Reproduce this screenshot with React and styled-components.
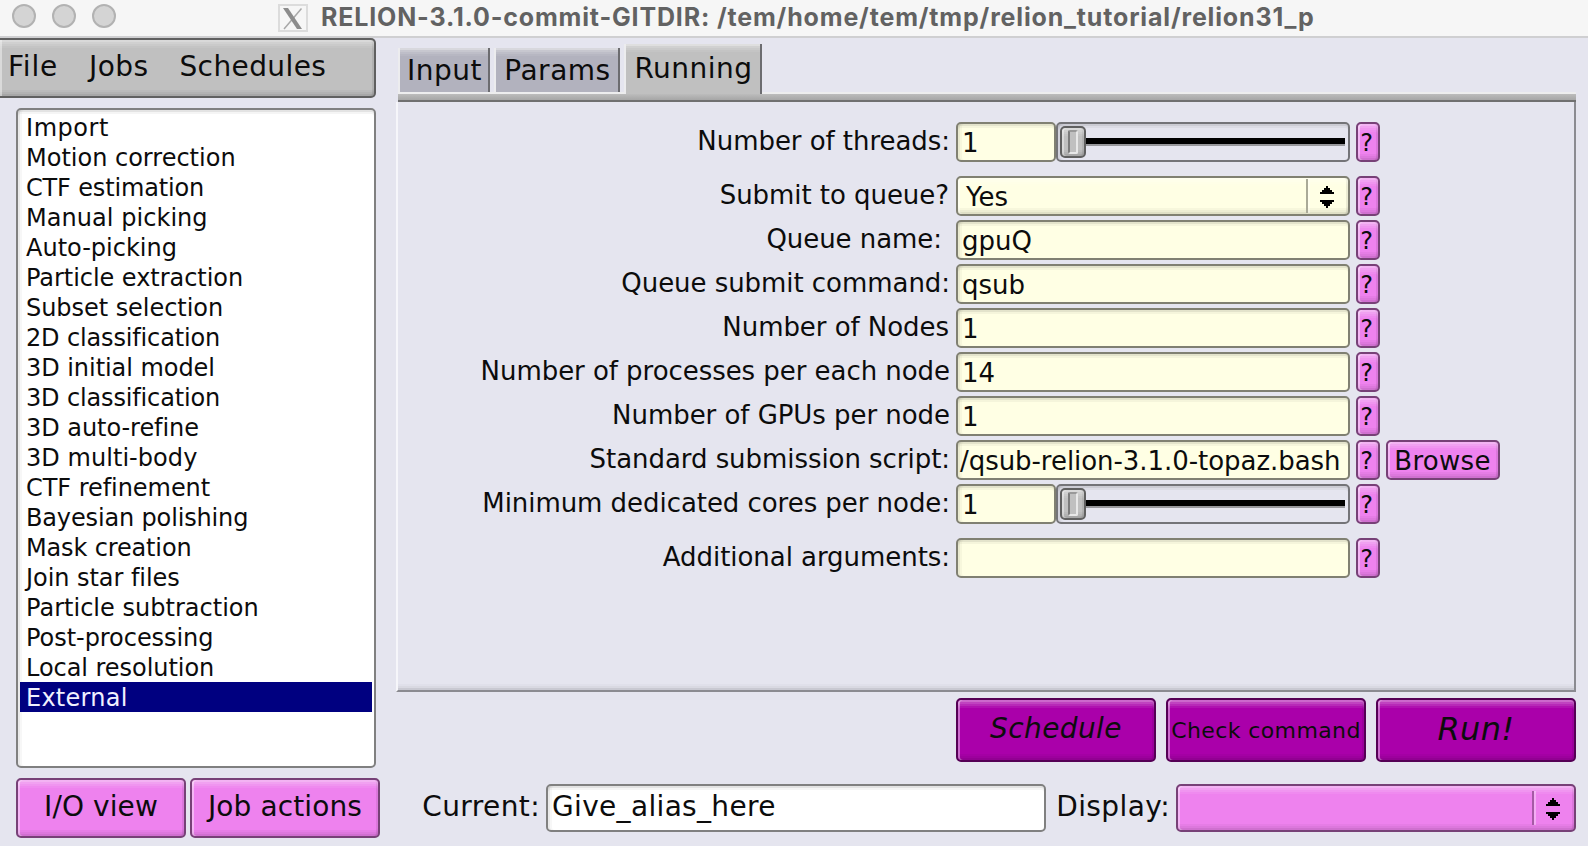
import React from 'react';
import styled, { createGlobalStyle, css } from 'styled-components';

const Global = createGlobalStyle`
  *, *::before, *::after { box-sizing: border-box; }
  body {
    margin: 0;
    background: #e5e5ef;
    font-family: "DejaVu Sans", sans-serif;
    color: #0c0c0c;
    overflow: hidden;
  }
  button, input { font: inherit; color: inherit; margin: 0; outline: none; }
`;

/* Stepped highlight at the top and left, stepped shade at the bottom and right. */
const raised = css`
  box-shadow:
    inset 0 2px rgba(255, 255, 255, 0.2),
    inset 0 4px rgba(255, 255, 255, 0.12),
    inset 0 6px rgba(255, 255, 255, 0.1),
    inset 0 8px rgba(255, 255, 255, 0.07),
    inset 2px 0 rgba(255, 255, 255, 0.42),
    inset 0 -2px rgba(0, 0, 0, 0.06),
    inset 0 -4px rgba(0, 0, 0, 0.04),
    inset 0 -6px rgba(0, 0, 0, 0.03),
    inset -2px 0 rgba(0, 0, 0, 0.08);
`;

const sunken = css`
  box-shadow:
    inset 0 2px rgba(0, 0, 0, 0.07),
    inset 0 4px rgba(0, 0, 0, 0.04),
    inset 2px 0 rgba(0, 0, 0, 0.05),
    inset 4px 0 rgba(0, 0, 0, 0.03);
`;

const Window = styled.div`
  width: 1588px;
  height: 846px;
  display: flex;
  flex-direction: column;
  background: #e5e5ef;
`;

const TitleBar = styled.header`
  height: 38px;
  flex: none;
  display: flex;
  align-items: flex-start;
  padding-left: 12px;
  background: #f6f6f6;
  border-bottom: 2px solid #cfcfd1;
`;

const Lights = styled.div`
  display: flex;
  gap: 16px;
  margin-top: 4px;
  width: 266px;
`;

const Light = styled.span`
  width: 24px;
  height: 24px;
  border-radius: 50%;
  background: #d4d4d4;
  border: 2px solid #b2b2b2;
`;

const AppIcon = styled.svg`
  width: 30px;
  height: 28px;
  margin-top: 4px;
  flex: none;
`;

const Title = styled.h1`
  margin: 0 0 0 13px;
  font: 700 25px/35px Inter, sans-serif;
  letter-spacing: 0.84px;
  color: #626262;
  white-space: nowrap;
`;

const Body = styled.div`
  display: flex;
  flex: 1;
`;

const Side = styled.aside`
  width: 396px;
  flex: none;
`;

const MenuBar = styled.nav`
  ${raised}
  display: flex;
  align-items: center;
  gap: 31px;
  width: 376px;
  height: 60px;
  padding: 0 0 4px 8px;
  background: #c0c0c0;
  border: 2px solid #606060;
  border-left: 0;
  border-radius: 0 5px 5px 0;
  font-size: 28px;
`;

const MenuItem = styled.span`
  letter-spacing: ${(p) => p.$spacing}px;
`;

const JobList = styled.ul`
  ${sunken}
  list-style: none;
  width: 360px;
  height: 660px;
  margin: 10px 0 10px 16px;
  padding: 2px;
  background: #fff;
  border: 2px solid #808080;
  border-radius: 5px;
`;

const Job = styled.li`
  height: 30px;
  padding-left: 6px;
  font-size: 24px;
  line-height: 33px;
  letter-spacing: ${(p) => p.$spacing - 0.15}px;
  white-space: nowrap;
  background: ${(p) => (p.$selected ? '#000080' : 'transparent')};
  color: ${(p) => (p.$selected ? '#f0f0ff' : 'inherit')};
`;

const SideActions = styled.div`
  display: flex;
  gap: 4px;
  margin-left: 16px;
`;

const Button = styled.button`
  ${raised}
  display: flex;
  align-items: center;
  justify-content: center;
  flex: none;
  padding: 0;
  background: #ee82ee;
  border: 2px solid #774177;
  border-radius: 5px;
  white-space: nowrap;
`;

const SideButton = styled(Button)`
  width: ${(p) => p.$width}px;
  height: 60px;
  padding-bottom: 4px;
  font-size: 28px;
  letter-spacing: 0.1px;
`;

const HelpButton = styled(Button)`
  width: 24px;
  height: 40px;
  padding: 2px 3px 0 0;
  font-size: 24px;
`;

const BrowseButton = styled(Button)`
  width: 114px;
  height: 40px;
  padding: 2px 1px 0 0;
  font-size: 26px;
  letter-spacing: 0.3px;
`;

const JobButton = styled(Button)`
  width: 200px;
  height: 64px;
  background: #aa00aa;
  border-color: #550055;
  font-size: ${(p) => p.$size}px;
  font-style: ${(p) => (p.$italic ? 'italic' : 'normal')};
  letter-spacing: 0.4px;
  padding-bottom: ${(p) => (p.$italic ? 3 : 0)}px;
`;

const Main = styled.main`
  flex: 1;
  padding-right: 12px;
`;

const Tabs = styled.div`
  display: flex;
  align-items: flex-end;
  gap: 4px;
  height: 54px;
  padding-left: 2px;
`;

const Tab = styled.div`
  position: relative;
  width: ${(p) => p.$width}px;
  height: ${(p) => (p.$active ? 50 : 44)}px;
  margin-bottom: ${(p) => (p.$active ? -2 : 0)}px;
  padding-left: 1px;
  line-height: ${(p) => (p.$active ? 50 : 46)}px;
  text-align: center;
  font-size: 28px;
  letter-spacing: 0.5px;
  background: ${(p) => (p.$active ? '#c0c0c0' : '#b2b2be')};
  border-left: 2px solid #ececee;
  border-right: 2px solid #6c6c70;
  box-shadow:
    inset 0 2px rgba(255, 255, 255, 0.3),
    inset 0 4px rgba(255, 255, 255, 0.14),
    inset 0 6px rgba(255, 255, 255, 0.1),
    inset 0 8px rgba(255, 255, 255, 0.07);
`;

const Bar = styled.div`
  height: 10px;
  margin-left: 2px;
  background: linear-gradient(#bcbcbc, #a6a6a6);
  border-top: 2px solid #ededee;
  border-bottom: 2px solid #707070;
`;

const Panel = styled.section`
  height: 590px;
  padding-top: 20px;
  border-left: 2px solid #f6f6fa;
  border-right: 2px solid #8b8b91;
  border-bottom: 2px solid #8b8b91;
  box-shadow:
    inset 0 -2px rgba(0, 0, 0, 0.07),
    inset 0 -4px rgba(0, 0, 0, 0.03),
    inset 0 -6px rgba(0, 0, 0, 0.02);
`;

const Row = styled.div`
  display: grid;
  grid-template-columns: 552px 394px 24px 114px;
  column-gap: 6px;
  height: 40px;
  margin-bottom: ${(p) => (p.$spaced ? 14 : 4)}px;
`;

const Label = styled.label`
  padding-right: ${(p) => p.$inset || 0}px;
  text-align: right;
  font-size: 26px;
  line-height: 39px;
  letter-spacing: -0.05px;
  white-space: pre;
`;

const Field = styled.div`
  ${sunken}
  height: 40px;
  padding: 1px 0 0 ${(p) => (p.$tight ? 2 : 4)}px;
  font-size: 26px;
  line-height: 37px;
  letter-spacing: ${(p) => (p.$tight ? -0.05 : 0)}px;
  white-space: nowrap;
  background: #ffffe4;
  border: 2px solid #808072;
  border-radius: 5px;
`;

const SliderGroup = styled.div`
  display: grid;
  grid-template-columns: 100px 294px;
`;

const SliderBox = styled.div`
  ${sunken}
  display: flex;
  align-items: center;
  height: 40px;
  padding-left: 2px;
  background: #e5e5ef;
  border: 2px solid #747478;
  border-radius: 5px;
`;

const Thumb = styled.div`
  ${raised}
  display: flex;
  align-items: center;
  justify-content: center;
  width: 26px;
  height: 32px;
  background: #c0c0c0;
  border: 2px solid #606060;
  border-radius: 5px;
`;

const Grip = styled.span`
  width: 10px;
  height: 24px;
  margin-right: 1px;
  border: 2px solid #e8e8e8;
  border-left-color: #7c7c7c;
  border-top-color: #999;
  border-radius: 2px;
  background: #c0c0c0;
`;

const Track = styled.div`
  width: 259px;
  height: 8px;
  background: #000;
  border-bottom: 2px solid #98989c;
`;

const Select = styled.div`
  ${raised}
  display: flex;
  align-items: center;
  justify-content: space-between;
  width: ${(p) => p.$width}px;
  height: ${(p) => p.$height}px;
  padding-left: 8px;
  font-size: 26px;
  background: ${(p) => p.$fill};
  border: 2px solid ${(p) => p.$edge};
  border-radius: 5px;
`;

const SelectText = styled.span`
  padding-top: 1px;
`;

const SelectArrows = styled.div`
  display: flex;
  align-items: center;
  justify-content: center;
  width: 42px;
  height: 34px;
  padding: ${(p) => p.$drop}px 2px 0 0;
  border-left: 2px solid ${(p) => p.$line};
  box-shadow: inset 2px 0 rgba(255, 255, 255, 0.35);
`;

const JobActions = styled.div`
  display: flex;
  justify-content: flex-end;
  gap: 10px;
  margin-top: 6px;
`;

const Footer = styled.footer`
  display: grid;
  grid-template-columns: 144px 500px 118px 400px;
  column-gap: 6px;
  width: 1180px;
  height: 48px;
  margin-top: 22px;
`;

const FooterLabel = styled.label`
  text-align: right;
  font-size: 28px;
  line-height: 46px;
  letter-spacing: 0.4px;
  white-space: nowrap;
`;

const AliasField = styled(Field)`
  height: 48px;
  padding: 0 0 0 4px;
  font-size: 28px;
  line-height: 42px;
  letter-spacing: 0.33px;
  background: #fff;
  border-color: #808080;
`;

const Arrows = () => (
  <svg width="14" height="22" viewBox="0 0 14 22" shapeRendering="crispEdges">
    <path d="M6 0h2v2h2v2h2v2h2v2H0V6h2V4h2V2h2zM0 14h14v2h-2v2h-2v2H8v2H6v-2H4v-2H2v-2H0z" />
  </svg>
);

const jobs = [
  ['Import', 0.7],
  ['Motion correction', 0.15],
  ['CTF estimation', 0],
  ['Manual picking', 0.2],
  ['Auto-picking', 0.15],
  ['Particle extraction', 0.1],
  ['Subset selection', 0.1],
  ['2D classification', 0],
  ['3D initial model', 0.1],
  ['3D classification', 0],
  ['3D auto-refine', 0.1],
  ['3D multi-body', 0.2],
  ['CTF refinement', 0.1],
  ['Bayesian polishing', 0],
  ['Mask creation', 0],
  ['Join star files', 0.1],
  ['Particle subtraction', 0.17],
  ['Post-processing', 0.1],
  ['Local resolution', 0.1],
  ['External', 0.4],
];

const settings = [
  { label: 'Number of threads:', kind: 'slider', value: '1', spaced: true },
  { label: 'Submit to queue?', kind: 'select', value: 'Yes', inset: 1 },
  { label: 'Queue name:', value: 'gpuQ', inset: 8 },
  { label: 'Queue submit command:', value: 'qsub' },
  { label: 'Number of Nodes', value: '1', inset: 1 },
  { label: 'Number of processes per each node', value: '14', inset: 0 },
  { label: 'Number of GPUs per node', value: '1', inset: 0 },
  { label: 'Standard submission script:', value: '/qsub-relion-3.1.0-topaz.bash', tight: true, browse: true },
  { label: 'Minimum dedicated cores per node:', kind: 'slider', value: '1', spaced: true },
  { label: 'Additional arguments:', value: '' },
];

function Control({ kind, value, tight }) {
  if (kind === 'slider') {
    return (
      <SliderGroup>
        <Field>{value}</Field>
        <SliderBox>
          <Thumb><Grip /></Thumb>
          <Track />
        </SliderBox>
      </SliderGroup>
    );
  }
  if (kind === 'select') {
    return (
      <Select $width={394} $height={40} $fill="#ffffe4" $edge="#808072">
        <SelectText>{value}</SelectText>
        <SelectArrows $line="#aaaa98" $drop={2}><Arrows /></SelectArrows>
      </Select>
    );
  }
  return <Field $tight={tight}>{value}</Field>;
}

export default function App() {
  return (
    <Window>
      <Global />
      <TitleBar>
        <Lights><Light /><Light /><Light /></Lights>
        <AppIcon viewBox="0 0 30 28">
          <rect x="1" y="1" width="28" height="26" fill="#f6f6f6" stroke="#dcdcdc" strokeWidth="2" />
          <path d="M23.5 4.5 6 25" stroke="#a8a8a8" strokeWidth="1.5" fill="none" />
          <path d="M5 4h5l14 21h-5z" fill="#8c8c8c" />
        </AppIcon>
        <Title>RELION-3.1.0-commit-GITDIR: /tem/home/tem/tmp/relion_tutorial/relion31_p</Title>
      </TitleBar>
      <Body>
        <Side>
          <MenuBar>
            <MenuItem $spacing={0.8}>File</MenuItem>
            <MenuItem $spacing={0.4}>Jobs</MenuItem>
            <MenuItem $spacing={0.4}>Schedules</MenuItem>
          </MenuBar>
          <JobList>
            {jobs.map(([name, spacing]) => (
              <Job key={name} $spacing={spacing} $selected={name === 'External'}>{name}</Job>
            ))}
          </JobList>
          <SideActions>
            <SideButton $width={170}>I/O view</SideButton>
            <SideButton $width={190}>Job actions</SideButton>
          </SideActions>
        </Side>
        <Main>
          <Tabs>
            <Tab $width={92}>Input</Tab>
            <Tab $width={126}>Params</Tab>
            <Tab $width={138} $active>Running</Tab>
          </Tabs>
          <Bar />
          <Panel>
            {settings.map((s) => (
              <Row key={s.label} $spaced={s.spaced}>
                <Label $inset={s.inset}>{s.label}</Label>
                <Control kind={s.kind} value={s.value} tight={s.tight} />
                <HelpButton>?</HelpButton>
                {s.browse && <BrowseButton>Browse</BrowseButton>}
              </Row>
            ))}
          </Panel>
          <JobActions>
            <JobButton $size={28} $italic>Schedule</JobButton>
            <JobButton $size={22}>Check command</JobButton>
            <JobButton $size={32} $italic>Run!</JobButton>
          </JobActions>
          <Footer>
            <FooterLabel>Current:</FooterLabel>
            <AliasField>Give_alias_here</AliasField>
            <FooterLabel>Display:</FooterLabel>
            <Select $width={400} $height={48} $fill="#ee82ee" $edge="#774177">
              <SelectText />
              <SelectArrows $line="#a55aa5" $drop={2}><Arrows /></SelectArrows>
            </Select>
          </Footer>
        </Main>
      </Body>
    </Window>
  );
}
